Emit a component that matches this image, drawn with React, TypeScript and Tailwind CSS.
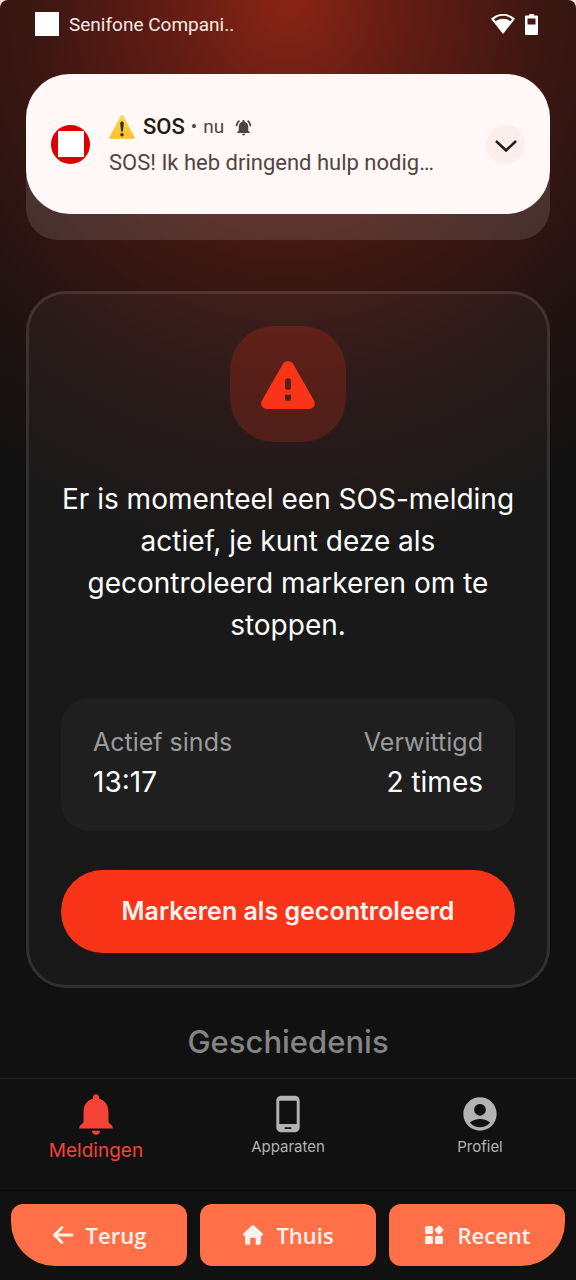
import type { ReactNode } from "react";
import { MdAccountCircle, MdNotifications, MdNotificationsActive, MdPhoneAndroid } from "react-icons/md";

const TABS = [
  { label: "Meldingen", icon: MdNotifications, active: true },
  { label: "Apparaten", icon: MdPhoneAndroid, active: false },
  { label: "Profiel", icon: MdAccountCircle, active: false },
];

function StatusBar() {
  return (
    <header className="flex h-12 items-center pr-[38px] pl-[35px] font-[Roboto,sans-serif] text-white">
      <span className="size-6 bg-white" />
      <span className="ml-2.5 pt-0.5 text-[19px] text-[#fbe9e6]">Senifone Compani..</span>
      <svg className="ml-auto h-5 w-6" viewBox="0 0 24 20" aria-hidden="true">
        <path d="M12 0C7.4 0 3.3 1.7 0 4.7L12 20 24 4.7C20.700 1.700 16.600 0 12 0z" fill="#fff" />
        <path d="M3 5.200C5.700 2.900 8.700 1.800 12 1.800s6.300 1.100 9 3.400L19.400 7.200C17.500 5.600 14.900 4.700 12 4.700S6.500 5.600 4.600 7.200z" fill="#4a1a14" />
      </svg>
      <svg className="ml-2.5 h-[21px] w-[13px]" viewBox="0 0 13 21" aria-hidden="true">
        <path d="M4 0h5v1.500h3a1 1 0 0 1 1 1V20a1 1 0 0 1-1 1H1a1 1 0 0 1-1-1V2.500a1 1 0 0 1 1-1h3z" fill="#fff" />
        <path d="M2.500 4.500h8v6h-8z" fill="#441813" />
      </svg>
    </header>
  );
}

function WarningEmoji() {
  return (
    <svg className="h-6 w-[26px]" viewBox="0 0 26 24" role="img" aria-label="Waarschuwing">
      <defs>
        <linearGradient id="sign" x1="0" y1="0" x2="0" y2="1">
          <stop offset="0" stopColor="#fdd855" />
          <stop offset="1" stopColor="#fbbf24" />
        </linearGradient>
      </defs>
      <path d="M11.600.9a1.600 1.600 0 0 1 2.800 0l11 21a1.300 1.300 0 0 1-1.100 1.900H1.700A1.300 1.300 0 0 1 .6 21.900z" fill="url(#sign)" />
      <path d="M11.200 8.500c0-2.600 3.600-2.600 3.600 0L13.900 16.500h-1.800z" fill="#35302c" />
      <circle cx="13" cy="19.800" r="1.700" fill="#35302c" />
    </svg>
  );
}

function Notification() {
  return (
    <section className="mx-[26px] mt-[26px] rounded-t-[44px] rounded-b-[32px] bg-white/12 pb-[26px] font-[Roboto,sans-serif]">
      <div className="flex h-[140px] items-center rounded-[44px] bg-[#fff8f6] px-[25px]">
        <span className="flex size-[39px] shrink-0 items-center justify-center rounded-full bg-[#dc0000]">
          <span className="size-[26px] bg-white" />
        </span>
        <div className="ml-[19px] min-w-0 flex-1 pt-0.5">
          <div className="flex items-center">
            <WarningEmoji />
            <h2 className="ml-2 text-[22px] leading-8 font-medium text-[#1f1a18]">SOS</h2>
            <span className="mx-1.5 text-[19px] text-[#53433f]">•</span>
            <span className="text-[19px] text-[#53433f]">nu</span>
            <MdNotificationsActive className="ml-2.5 size-[19px] text-[#53433f]" />
          </div>
          <p className="mt-1 truncate text-[22px] leading-8 text-[#53433f]">SOS! Ik heb dringend hulp nodig…</p>
        </div>
        <button type="button" aria-label="Uitklappen" className="flex size-[39px] shrink-0 items-center justify-center rounded-full bg-[#fceeea]">
          <svg className="mt-1 h-3 w-[22px]" viewBox="0 0 22 12" fill="none" stroke="#1f1a18" strokeWidth="2.500" aria-hidden="true">
            <path d="M1 1l10 9.500L21 1" />
          </svg>
        </button>
      </div>
    </section>
  );
}

function Stat({ label, value, className }: { label: string; value: string; className?: string }) {
  return (
    <div className={className}>
      <dt className="text-[25px] leading-8 text-[#9b9b9b]">{label}</dt>
      <dd className="mt-2 text-[28px] leading-8 text-white">{value}</dd>
    </div>
  );
}

function AlertCard() {
  return (
    <section className="mx-[26px] mt-[51px] rounded-[40px] border-[3px] border-white/10 bg-white/[0.035] px-8 pt-8 pb-8">
      <div className="mx-auto flex size-[116px] items-center justify-center rounded-[44px] bg-[#fa3419]/20">
        <svg className="mt-0.5 h-12 w-[54px]" viewBox="0 0 54 49" preserveAspectRatio="none" aria-hidden="true">
          <path
            fillRule="evenodd"
            fill="#fa3419"
            d="M21.500 3.500a6.200 6.200 0 0 1 11 0l20.600 37a5.700 5.700 0 0 1-5 8.500H5.900a5.700 5.700 0 0 1-5-8.500zM27 17.500a3 3 0 0 0-3 3v6a3 3 0 0 0 6 0v-6a3 3 0 0 0-3-3zM24 34.500v6h6v-6z"
          />
        </svg>
      </div>
      <p className="-mx-4 mt-9 text-center text-[28px] leading-[42px] text-white">
        Er is momenteel een SOS-melding
        <br />
        actief, je kunt deze als
        <br />
        gecontroleerd markeren om te
        <br />
        stoppen.
      </p>
      <dl className="mt-[52px] flex justify-between rounded-[28px] bg-[#1f1f1f] px-8 pt-7 pb-[33px]">
        <Stat label="Actief sinds" value="13:17" className="font-normal" />
        <Stat label="Verwittigd" value="2 times" className="text-right" />
      </dl>
      <button type="button" className="mt-[39px] h-[83px] w-full rounded-full bg-[#fa3419] text-[25px] font-semibold text-[#fff3f0]">
        Markeren als gecontroleerd
      </button>
    </section>
  );
}

function TabBar() {
  return (
    <nav className="grid h-[112px] grid-cols-3 border-t border-[#222]">
      {TABS.map(({ label, icon: Icon, active }) => (
        <a key={label} href="#" className={`flex flex-col items-center pt-2.5 ${active ? "text-[#f44336]" : "text-[#b3b3b3]"}`}>
          <span className="flex h-[50px] items-center">
            <Icon className={active ? "size-[50px]" : "size-10"} />
          </span>
          <span className={active ? "text-[19px] leading-6" : "text-[15px] leading-4"}>{label}</span>
        </a>
      ))}
    </nav>
  );
}

function SystemButton({ label, shape, children }: { label: string; shape: string; children: ReactNode }) {
  return (
    <button type="button" className={`flex h-[62px] flex-1 items-center justify-center gap-3 bg-[#ff7048] text-[22px] font-semibold text-[#fff1ec] ${shape}`}>
      <svg className="size-[22px]" viewBox="0 0 22 22" aria-hidden="true">
        {children}
      </svg>
      {label}
    </button>
  );
}

export default function App() {
  return (
    <div className="bg-[#f3dfe0]">
      <main className="flex min-h-screen flex-col overflow-hidden rounded-t-lg bg-[#111] bg-[radial-gradient(520px_560px_at_50%_0px,#8a2415_0%,#5f1c14_25%,#3e1712_48%,#241312_72%,#111_100%)] font-[Inter,sans-serif]">
        <StatusBar />
        <Notification />
        <AlertCard />
        <h2 className="mt-8 mb-auto text-center text-[31px] leading-[44px] font-medium text-[#858585]">Geschiedenis</h2>
        <TabBar />
        <footer className="flex gap-[13px] border-t border-[#0a0a0a] px-[11px] pt-[13px] pb-3.5 font-['Open_Sans',sans-serif]">
          <SystemButton label="Terug" shape="rounded-xl rounded-bl-[44px]">
            <path d="M20 11H3M10 3.500L2.500 11l7.500 7.500" fill="none" stroke="currentColor" strokeWidth="2.800" strokeLinecap="round" strokeLinejoin="round" />
          </SystemButton>
          <SystemButton label="Thuis" shape="rounded-xl">
            <path d="M9.600 1.700a2 2 0 0 1 2.800 0l8 7.600c1 1 .4 2.400-1 2.400H19V19a1.700 1.700 0 0 1-1.700 1.700h-3.600V15a1.300 1.300 0 0 0-1.300-1.300H9.600A1.300 1.300 0 0 0 8.300 15v5.700H4.700A1.700 1.700 0 0 1 3 19v-7.300h-.4c-1.400 0-2-1.400-1-2.400z" fill="currentColor" />
          </SystemButton>
          <SystemButton label="Recent" shape="rounded-xl rounded-br-[44px]">
            <g fill="currentColor">
              <rect x="2" y="2" width="8" height="8" rx="1.500" />
              <rect x="2" y="12" width="8" height="8" rx="1.500" />
              <rect x="12" y="12" width="8" height="8" rx="1.500" />
              <rect x="12.500" y="2.500" width="7" height="7" rx="1.500" transform="rotate(45 16 6)" />
            </g>
          </SystemButton>
        </footer>
      </main>
    </div>
  );
}
